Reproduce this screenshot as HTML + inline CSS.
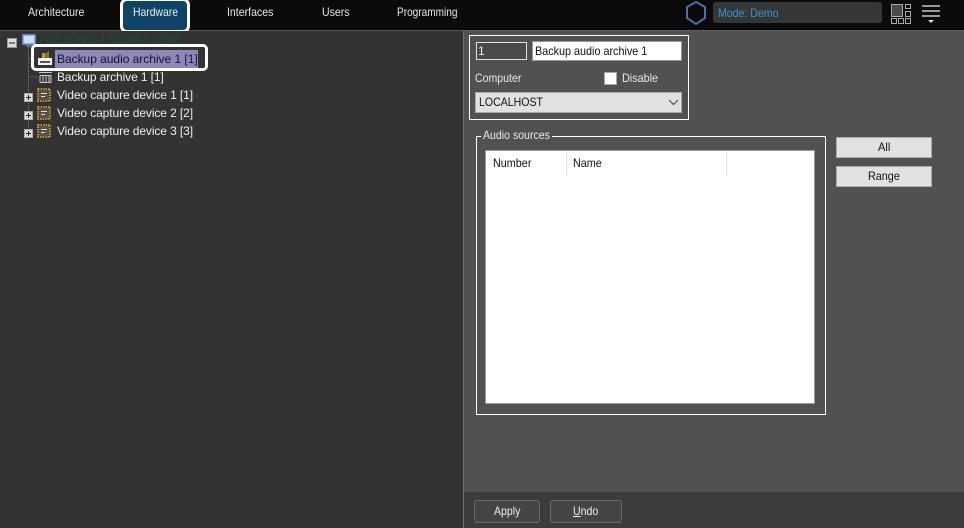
<!DOCTYPE html>
<html>
<head>
<meta charset="utf-8">
<style>
html,body{margin:0;padding:0;width:964px;height:528px;overflow:hidden;background:#333;font-family:"Liberation Sans",sans-serif;font-size:12px;}
div,span{position:absolute;box-sizing:border-box;white-space:nowrap;}
svg{position:absolute;}
.t{color:#e8e8e8;line-height:14px;height:14px;}
.n{transform:scaleX(.88);transform-origin:0 0;}
.nav{top:5px;color:#e6e6e6;}
.tree{color:#eee;left:57px;letter-spacing:-.1px;}
.btn{background:#e1e1e1;border:1px solid #adadad;}
.bb{background:#454548;border:1px solid #69696b;border-radius:3px;}
</style>
</head>
<body>
<!-- top bar -->
<div style="left:0;top:0;width:964px;height:30px;background:#0b0b0b"></div>
<div style="left:0;top:30px;width:964px;height:1px;background:#5a5a5a"></div>
<div class="t nav n" style="left:28px">Architecture</div>
<div style="left:120px;top:-2px;width:70px;height:35px;background:#0e4468;border:3px solid #fff;border-radius:7px"></div>
<div class="t nav n" style="left:133px;color:#eee;transform:scaleX(.865)">Hardware</div>
<div class="t nav n" style="left:227px">Interfaces</div>
<div class="t nav n" style="left:322px">Users</div>
<div class="t nav n" style="left:397px;transform:scaleX(.84)">Programming</div>

<svg style="left:684px;top:0" width="26" height="26"><polygon points="12,2 21,7 21,18 12,24 3,18 3,7" fill="none" stroke="#4d6ca8" stroke-width="2"/></svg>
<div style="left:713px;top:2px;width:169px;height:21px;background:#343638;border-radius:3px"></div>
<div class="t n" style="left:718px;top:6px;color:#3a96d4">Mode: Demo</div>
<svg style="left:891px;top:3px" width="22" height="22" stroke="#aaa" stroke-width="1"><rect x=".5" y="1.5" width="11" height="12" fill="#4a4a4c"/><rect x="14.5" y="1.5" width="5" height="4" fill="none"/><rect x="14.5" y="8.5" width="5" height="5" fill="none"/><rect x=".5" y="15.5" width="5" height="5" fill="none"/><rect x="7.5" y="15.5" width="5" height="5" fill="none"/><rect x="14.5" y="15.5" width="5" height="5" fill="none"/></svg>
<svg style="left:921px;top:4px" width="22" height="20"><path d="M1 2H19M1 7H19M1 12H19" stroke="#c8c8c8" stroke-width="1.6"/><path d="M7 16H13L10 19Z" fill="#ddd"/></svg>

<!-- left panel -->
<div style="left:0;top:31px;width:463px;height:497px;background:#333"></div>
<div style="left:463px;top:31px;width:1px;height:497px;background:#6e6e6e"></div>

<!-- tree lines -->
<svg style="left:0;top:31px" width="60" height="110"><path d="M28.5 12V100M28.5 27H37M28.5 46H38" stroke="#777" stroke-dasharray="1 1" fill="none"/></svg>
<!-- root -->
<svg style="left:7px;top:38px" width="10" height="10"><rect x=".5" y=".5" width="9" height="9" fill="#ddd" stroke="#999"/><path d="M2 5H8" stroke="#222"/></svg>
<svg style="left:22px;top:33px" width="14" height="14"><rect x="1" y="2" width="12" height="9" fill="#cfe0f4" stroke="#6f9fd8" stroke-width="1.5"/><path d="M4 13H10" stroke="#6f9fd8"/></svg>
<div class="t" style="left:40px;top:33px;color:#15522f;transform:scaleX(.92);transform-origin:0 0">LOCALHOST [COMPUTER]</div>

<!-- selected -->
<div style="left:31px;top:44px;width:177px;height:27px;border:3px solid #fff;border-radius:5px;background:#333"></div>
<div style="left:55px;top:50px;width:143px;height:18px;background:#8d87ba"></div>
<svg style="left:37px;top:50px" width="17" height="17"><path d="M5 3H8V8H5Z" fill="#b5a03a"/><path d="M8 4L12 1V9L8 7Z" fill="#8a7a30"/><rect x="1" y="8" width="14" height="7" fill="#f4f4f4"/><path d="M3 12H13" stroke="#222" stroke-width="1.5"/></svg>
<div class="t tree" style="top:52px;color:#141428;letter-spacing:-.03px">Backup audio archive 1 [1]</div>

<svg style="left:38px;top:71px" width="16" height="14"><path d="M1 1.5H14M2 4.5H13M2 11.5H13M2 4.5V11.5M5 4.5V11.5M8 4.5V11.5M11 4.5V11.5M13 4.5V11.5" stroke="#c9c9c9" fill="none"/></svg>
<div class="t tree" style="top:70px">Backup archive 1 [1]</div>

<!-- devices -->
<svg style="left:24px;top:88px" width="30" height="50">
 <g><rect x=".5" y="5.5" width="8" height="8" fill="#ddd" stroke="#aaa"/><path d="M2 9.5H7M4.5 7V12" stroke="#222"/>
 <rect x="15" y="2" width="10" height="10" fill="#55524e"/><rect x="14" y="1" width="12" height="12" fill="none" stroke="#c08f3c" stroke-width="2" stroke-dasharray="1.5 1"/><path d="M17 5.5H23M17 8.5H21" stroke="#ddd"/></g>
 <g transform="translate(0,18)"><rect x=".5" y="5.5" width="8" height="8" fill="#ddd" stroke="#aaa"/><path d="M2 9.5H7M4.5 7V12" stroke="#222"/>
 <rect x="15" y="2" width="10" height="10" fill="#55524e"/><rect x="14" y="1" width="12" height="12" fill="none" stroke="#c08f3c" stroke-width="2" stroke-dasharray="1.5 1"/><path d="M17 5.5H23M17 8.5H21" stroke="#ddd"/></g>
 <g transform="translate(0,36)"><rect x=".5" y="5.5" width="8" height="8" fill="#ddd" stroke="#aaa"/><path d="M2 9.5H7M4.5 7V12" stroke="#222"/>
 <rect x="15" y="2" width="10" height="10" fill="#55524e"/><rect x="14" y="1" width="12" height="12" fill="none" stroke="#c08f3c" stroke-width="2" stroke-dasharray="1.5 1"/><path d="M17 5.5H23M17 8.5H21" stroke="#ddd"/></g>
</svg>
<div class="t tree" style="top:88px">Video capture device 1 [1]</div>
<div class="t tree" style="top:106px">Video capture device 2 [2]</div>
<div class="t tree" style="top:124px">Video capture device 3 [3]</div>

<!-- right panel -->
<div style="left:464px;top:31px;width:500px;height:461px;background:#515151"></div>
<div style="left:464px;top:492px;width:500px;height:36px;background:#3c3c3c"></div>

<div style="left:469px;top:35px;width:220px;height:85px;border:1px solid #fff"></div>
<div style="left:476px;top:42px;width:51px;height:18px;border:1px solid #e0e0e0;background:#4a4a4a"></div>
<div class="t" style="left:478px;top:44px">1</div>
<div style="left:532px;top:41px;width:150px;height:20px;background:#fff;border:1px solid #999"></div>
<div class="t n" style="left:535px;top:44px;color:#111;transform:scaleX(.9)">Backup audio archive 1</div>
<div class="t n" style="left:475px;top:71px">Computer</div>
<div style="left:604px;top:72px;width:13px;height:13px;background:#fff;border:1px solid #aaa"></div>
<div class="t n" style="left:622px;top:71px;transform:scaleX(.9)">Disable</div>
<div style="left:475px;top:92px;width:207px;height:21px;background:#e1e1e1;border:1px solid #aaa"></div>
<div class="t n" style="left:479px;top:95px;color:#111">LOCALHOST</div>
<svg style="left:668px;top:99px" width="11" height="7"><path d="M1 1L5.5 5.5L10 1" fill="none" stroke="#555" stroke-width="1.2"/></svg>

<!-- group -->
<div style="left:476px;top:136px;width:350px;height:279px;border:1px solid #fff"></div>
<div style="left:481px;top:130px;width:71px;height:12px;background:#515151"></div>
<div class="t n" style="left:483px;top:128px">Audio sources</div>
<div style="left:485px;top:150px;width:330px;height:254px;background:#fff;border:1px solid #999"></div>
<div style="left:566px;top:152px;width:1px;height:24px;background:#e0e0e0"></div>
<div style="left:726px;top:152px;width:1px;height:24px;background:#e0e0e0"></div>
<div class="t n" style="left:493px;top:156px;color:#111;transform:scaleX(.9)">Number</div>
<div class="t n" style="left:573px;top:156px;color:#111;transform:scaleX(.9)">Name</div>

<div class="btn" style="left:836px;top:137px;width:96px;height:21px"></div>
<div class="t" style="left:878px;top:140px;color:#111;transform:scaleX(.92);transform-origin:0 0">All</div>
<div class="btn" style="left:836px;top:166px;width:96px;height:21px"></div>
<div class="t n" style="left:868px;top:169px;color:#111;transform:scaleX(.9)">Range</div>

<div class="bb" style="left:474px;top:500px;width:66px;height:23px"></div>
<div class="t n" style="left:494px;top:504px;color:#eee">Apply</div>
<div class="bb" style="left:550px;top:500px;width:72px;height:23px"></div>
<div class="t n" style="left:573px;top:504px;color:#eee"><u>U</u>ndo</div>
</body>
</html>
